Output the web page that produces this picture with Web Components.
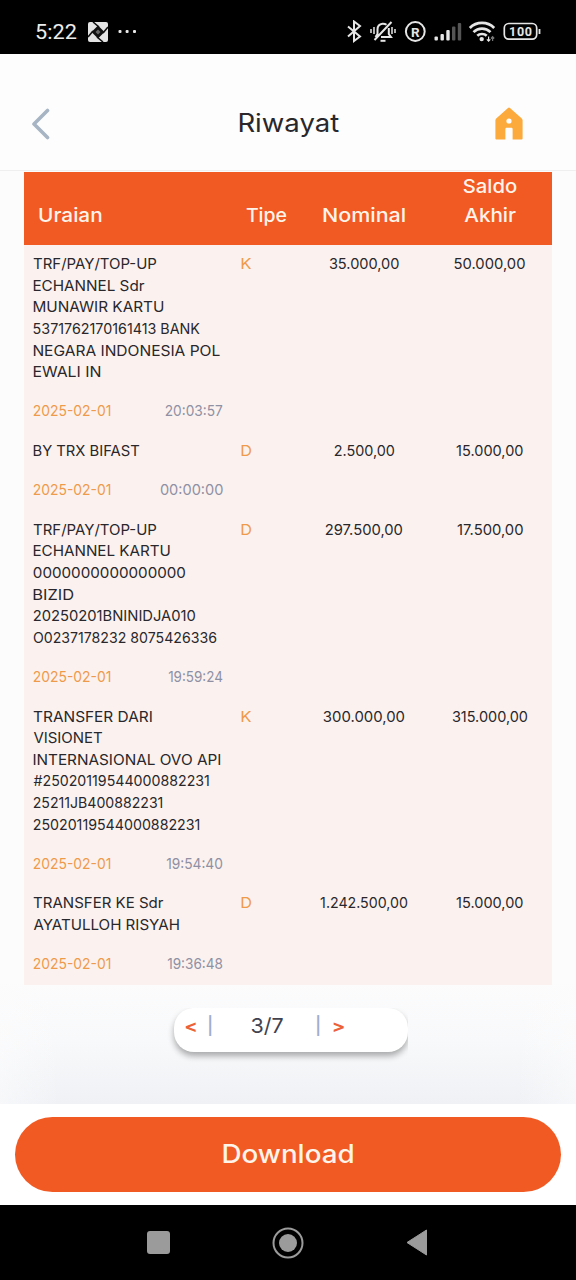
<!DOCTYPE html>
<html lang="id">
<head>
<meta charset="utf-8">
<meta name="viewport" content="width=device-width, initial-scale=1">
<title>Riwayat</title>
<style>
  body {
    margin: 0;
    background: #fcfcfd;
    color: #29272b;
    font-family: Inter, "Liberation Sans", sans-serif;
  }
</style>
</head>
<body>
<history-app></history-app>

<script>
/**
 * Single line of text stretched to a fixed ink width
 * <fit-text w="62">Uraian</fit-text>
 */
class FitText extends HTMLElement {
  constructor() {
    super();
    this.attachShadow({ mode: 'open' });
    this.shadowRoot.innerHTML = `
      <style>
        :host { display: inline-block; white-space: nowrap; text-align: left; }
        span { display: inline-block; vertical-align: top; transform-origin: 0 50%; }
      </style>
      <span><slot></slot></span>
    `;
  }

  connectedCallback() {
    const width = Number(this.getAttribute('w'));
    const style = getComputedStyle(this);
    const ctx = FitText.canvas.getContext('2d');
    // Measured at 10x, the small sizes are rounded to whole pixels
    ctx.font = `${style.fontWeight} ${parseFloat(style.fontSize) * 10}px ${style.fontFamily}`;
    const m = ctx.measureText(this.textContent);
    const left = m.actualBoundingBoxLeft / 10;
    const ink = left + m.actualBoundingBoxRight / 10;
    // Leave room for the soft edge of the outer glyphs
    const edge = width > 5 ? 0.5 : 0;
    const scale = (width - edge * 2) / ink;

    this.style.width = `${width}px`;
    this.shadowRoot.querySelector('span').style.transform =
      `translateX(${edge + 0.2}px) scaleX(${scale}) translateX(${left}px)`;
  }
}
FitText.canvas = document.createElement('canvas');

// Android status bar
class StatusBar extends HTMLElement {
  constructor() {
    super();
    this.attachShadow({ mode: 'open' });
    this.shadowRoot.innerHTML = `
      <style>
        :host {
          display: flex;
          justify-content: space-between;
          align-items: center;
          box-sizing: border-box;
          height: 54px;
          padding: 9px 35px 0 36px;
          background: #000;
          color: #ececec;
          font-family: Roboto, sans-serif;
          font-size: 20.5px;
        }
        .side { display: flex; align-items: center; }
        svg { display: block; }
        .app { margin: 0 10px 0 11px; }
      </style>
      <div class="side">
        <fit-text w="40.5">5:22</fit-text>
        <svg class="app" width="20" height="20" viewBox="0 0 20 20">
          <rect width="20" height="20" rx="2" fill="#e4e4e4"/>
          <path d="M10 3.5L16.5 10L10 16.5L3.5 10Z" fill="#111"/>
          <path d="M5 0L11 5M20 5L15 11M15 20L9 15M0 15L5 9" stroke="#111" stroke-width="1.6"/>
          <path d="M10 7.5L12.5 10L10 12.5L7.5 10Z" fill="#666"/>
        </svg>
        <svg width="20" height="4" viewBox="0 0 20 4" fill="#e8e8e8">
          <rect x=".5" y="0" width="3" height="3" rx="1"/>
          <rect x="7.6" y="0" width="3" height="3" rx="1"/>
          <rect x="15" y="0" width="3" height="3" rx="1"/>
        </svg>
      </div>
      <div class="side">
        <svg width="194" height="24" viewBox="347 19.5 194 24" fill="none" stroke="#e6e6e6" stroke-width="2">
          <!-- bluetooth -->
          <path d="M348 26L360 36L354 40.5V21L360 25.5L348 36"/>
          <!-- muted bell -->
          <path d="M375.5 36.5L377.5 33.5V29C377.5 25.5 379.5 23.5 382.5 23.2C384 23.1 385.5 23.5 386.5 24.3M388.8 27.5V33.5L391 36.6H381M374.5 39.5L391.5 21.5" stroke-width="2"/>
          <path d="M380.5 40.3H385.5" stroke-width="2"/>
          <path d="M371 28.5V32.5M374 26.5V33.5M392 26.5V33.5M395 28.5V32.5" stroke-width="1.5"/>
          <!-- registered -->
          <circle cx="415.3" cy="31" r="9.4"/>
          <text x="415.3" y="36" text-anchor="middle" fill="#e6e6e6" stroke="none" font-size="13.5" font-weight="700">R</text>
          <!-- signal -->
          <g stroke="none" fill="#e6e6e6">
            <rect x="434.5" y="36" width="3.4" height="4" rx="1"/>
            <rect x="440.5" y="33.5" width="3.4" height="6.5" rx="1"/>
            <rect x="446.3" y="29.5" width="3.4" height="10.5" rx="1"/>
            <g fill="#555">
              <rect x="452" y="26" width="3.4" height="14" rx="1"/>
              <rect x="457.8" y="22.5" width="3.4" height="17.5" rx="1"/>
            </g>
          </g>
          <!-- wifi -->
          <path d="M469.8 27.5C476.5 20.8 487.5 20.8 494.2 27.5M473.5 31.6C478.2 27 485.8 27 490.5 31.6M477.3 35.3C479.8 32.9 484.2 32.9 486.7 35.3" stroke-width="2.7"/>
          <circle cx="481.7" cy="38.6" r="2.2" fill="#e6e6e6" stroke="none"/>
          <path d="M488.6 36V40.5M486.9 38.8L488.6 40.6L490.3 38.8" stroke-width="1.2"/>
          <path d="M492.6 40.5V36.2M491 38L492.6 36.2L494.2 38" stroke="#777" stroke-width="1.2"/>
          <!-- battery -->
          <rect x="504.3" y="23" width="32.4" height="15.6" rx="4.5" stroke-width="1.7"/>
          <path d="M539.5 28.5V33.5" stroke-width="1.8"/>
          <text x="520.5" y="35.4" text-anchor="middle" textLength="23" fill="#e6e6e6" stroke="none" font-size="12.5" font-weight="700">100</text>
        </svg>
      </div>
    `;
  }
}

// Title bar with back and home buttons
class TitleBar extends HTMLElement {
  constructor() {
    super();
    this.attachShadow({ mode: 'open' });
    this.shadowRoot.innerHTML = `
      <style>
        :host {
          display: grid;
          grid-template-columns: 1fr auto 1fr;
          align-items: center;
          box-sizing: border-box;
          height: 117px;
          padding: 23px 53px 0 31px;
          border-bottom: 1px solid #efefef;
          background: #fdfdfd;
          font-size: 25px;
          line-height: 36px;
        }
        .title { padding: 0 0 1px 23px; }
        .home { justify-self: end; }
        svg { display: block; }
      </style>
      <svg width="20" height="32" viewBox="0 0 20 32">
        <path d="M16.5 2.5L3 16L16.5 29.5" fill="none" stroke="#a6b4c3" stroke-width="3.6" stroke-linecap="round" stroke-linejoin="round"/>
      </svg>
      <div class="title"><slot></slot></div>
      <svg class="home" width="28" height="33" viewBox="0 0 28 33">
        <path d="M13 .9Q14 0 15 .9L26.8 11.5Q27.6 12.3 27.6 13.5V31.5Q27.6 32.5 26.6 32.5H17.6V22Q17.6 20.8 16.6 20.8H11.4Q10.4 20.8 10.4 22V32.5H1.4Q.4 32.5 .4 31.5V13.5Q.4 12.3 1.2 11.5Z" fill="#fdaa3c"/>
        <circle cx="14" cy="14" r="2.6" fill="#fdfdfd"/>
      </svg>
    `;
  }
}

/**
 * One row of the history table
 * Values are [text, width] pairs
 */
class HistoryRow extends HTMLElement {
  constructor() {
    super();
    this.attachShadow({ mode: 'open' });
  }

  set data(row) {
    const fit = ([text, w]) => `<fit-text w="${w}">${text}</fit-text>`;
    this.shadowRoot.innerHTML = `
      <style>
        :host {
          display: grid;
          grid-template-columns: 208px 60px 126px 125px;
          padding: 8.3px 0 9.7px 9px;
          font-size: 14.4px;
          line-height: 21.6px;
        }
        fit-text { display: block; height: 21.6px; }
        .meta {
          display: flex;
          justify-content: space-between;
          width: 189.5px;
          margin-top: 17.6px;
        }
        .date, .type { color: #ef9a4b; }
        .time { color: #8f90a4; }
        .amount { display: flex; justify-content: center; }
      </style>
      <div>
        ${row.lines.map(fit).join('')}
        <div class="meta">
          <span class="date">${fit(['2025-02-01', 77.5])}</span>
          <span class="time">${fit(row.time)}</span>
        </div>
      </div>
      <div class="type">${fit([row.type, 10.5])}</div>
      <div class="amount">${fit(row.nominal)}</div>
      <div class="amount">${fit(row.saldo)}</div>
    `;
  }
}

class HistoryTable extends HTMLElement {
  constructor() {
    super();
    this.attachShadow({ mode: 'open' });
    this.shadowRoot.innerHTML = `
      <style>
        :host { display: block; background: #fbf2ef; }
        .head {
          display: grid;
          grid-template-columns: 217px 60px 126px 125px;
          align-items: end;
          box-sizing: border-box;
          height: 73px;
          padding-bottom: 15px;
          background: #f15a23;
          color: #fff4ea;
          font-size: 19.2px;
          font-weight: 500;
          line-height: 28.8px;
        }
        .head div { text-align: center; }
        .head .left { text-align: left; padding-left: 14.5px; }
        .head .type { text-align: left; padding-left: 4.5px; }
        fit-text { vertical-align: top; }
      </style>
      <div class="head">
        <div class="left"><fit-text w="62.5">Uraian</fit-text></div>
        <div class="type"><fit-text w="40.5">Tipe</fit-text></div>
        <div><fit-text w="82">Nominal</fit-text></div>
        <div><fit-text w="53.5">Saldo</fit-text><br><fit-text w="52">Akhir</fit-text></div>
      </div>
    `;
  }

  set rows(rows) {
    rows.forEach((data) => {
      const row = document.createElement('history-row');
      row.data = data;
      this.shadowRoot.appendChild(row);
    });
  }
}

class PageSwitch extends HTMLElement {
  constructor() {
    super();
    this.attachShadow({ mode: 'open' });
    this.shadowRoot.innerHTML = `
      <style>
        :host {
          display: flex;
          align-items: center;
          box-sizing: border-box;
          width: 234px;
          height: 44px;
          padding: 0 64px 9px 11px;
          border-radius: 20px;
          background: #fff;
          box-shadow: 0 4px 6px rgba(0, 0, 0, 0.32);
          clip-path: inset(0 0 -20px -20px);
          color: #42424f;
          font-size: 20.5px;
          line-height: 24px;
        }
        .arrow { color: #ec6238; font-size: 17px; font-weight: 700; }
        .bar { color: #9fafcd; font-size: 17.5px; }
        .prev { margin-left: 13px; }
        .next { margin-right: 14px; }
        .page { flex: 1; text-align: center; padding-left: 6px; }
      </style>
      <fit-text class="arrow" w="11">&lt;</fit-text>
      <fit-text class="bar prev" w="2">|</fit-text>
      <div class="page"><fit-text w="32">3/7</fit-text></div>
      <fit-text class="bar next" w="2">|</fit-text>
      <fit-text class="arrow" w="11">&gt;</fit-text>
    `;
  }
}

class DownloadBar extends HTMLElement {
  constructor() {
    super();
    this.attachShadow({ mode: 'open' });
    this.shadowRoot.innerHTML = `
      <style>
        :host { display: block; padding: 13px 15px; background: #fff; font-size: 25px; font-weight: 500; }
        button {
          display: block;
          width: 100%;
          height: 75px;
          padding: 0 0 2px;
          border: 0;
          border-radius: 37.5px;
          background: #f15a23;
          color: #fff4ea;
          font: inherit;
          line-height: 36px;
        }
      </style>
      <button><slot></slot></button>
    `;
  }
}

// Android navigation buttons
class SystemNav extends HTMLElement {
  constructor() {
    super();
    this.attachShadow({ mode: 'open' });
    this.shadowRoot.innerHTML = `
      <style>
        :host {
          display: flex;
          justify-content: space-between;
          align-items: center;
          box-sizing: border-box;
          height: 75px;
          padding: 0 148px 0 147px;
          background: #000;
        }
      </style>
      <svg width="23" height="23"><rect width="23" height="23" rx="3" fill="#9b9b9b"/></svg>
      <svg width="32" height="32" viewBox="0 0 32 32">
        <circle cx="16" cy="16" r="14.5" fill="none" stroke="#9b9b9b" stroke-width="2"/>
        <circle cx="16" cy="16" r="9" fill="#9b9b9b"/>
      </svg>
      <svg width="22" height="27" viewBox="0 0 22 27">
        <path d="M1 13.5L20.5 1V26Z" fill="#9b9b9b" stroke="#9b9b9b" stroke-linejoin="round"/>
      </svg>
    `;
  }
}

class HistoryApp extends HTMLElement {
  constructor() {
    super();
    this.attachShadow({ mode: 'open' });
    this.shadowRoot.innerHTML = `
      <style>
        :host { display: flex; flex-direction: column; height: 1280px; overflow: hidden; }
        main {
          flex: 1;
          display: flex;
          flex-direction: column;
          box-sizing: border-box;
          padding: 1px 24px 0;
          background:
            linear-gradient(90deg, rgba(252, 252, 253, 0.6), rgba(252, 252, 253, 0) 60px, rgba(252, 252, 253, 0) 516px, rgba(252, 252, 253, 0.6)),
            linear-gradient(#fcfcfd 810px, #f8f9fa 870px, #eff1f5 933px);
        }
        history-table { height: 813px; }
        page-switch { margin: 23px 0 0 150px; }
      </style>
      <status-bar></status-bar>
      <title-bar><fit-text w="100">Riwayat</fit-text></title-bar>
      <main>
        <history-table></history-table>
        <page-switch></page-switch>
      </main>
      <download-bar><fit-text w="130">Download</fit-text></download-bar>
      <system-nav></system-nav>
    `;
    this.shadowRoot.querySelector('history-table').rows = TRANSACTIONS;
  }
}

const TRANSACTIONS = [
  {
    lines: [
      ['TRF/PAY/TOP-UP', 123.5],
      ['ECHANNEL Sdr', 111.5],
      ['MUNAWIR KARTU', 130.5],
      ['5371762170161413 BANK', 167],
      ['NEGARA INDONESIA POL', 187],
      ['EWALI IN', 67.5]
    ],
    time: ['20:03:57', 57.5],
    type: 'K',
    nominal: ['35.000,00', 70],
    saldo: ['50.000,00', 71]
  },
  {
    lines: [['BY TRX BIFAST', 106.5]],
    time: ['00:00:00', 63],
    type: 'D',
    nominal: ['2.500,00', 60.5],
    saldo: ['15.000,00', 67]
  },
  {
    lines: [
      ['TRF/PAY/TOP-UP', 123.5],
      ['ECHANNEL KARTU', 137],
      ['0000000000000000', 152.5],
      ['BIZID', 40.5],
      ['20250201BNINIDJA010', 162.5],
      ['O0237178232 8075426336', 183.5]
    ],
    time: ['19:59:24', 54.5],
    type: 'D',
    nominal: ['297.500,00', 77.5],
    saldo: ['17.500,00', 66]
  },
  {
    lines: [
      ['TRANSFER DARI', 119],
      ['VISIONET', 69.5],
      ['INTERNASIONAL OVO API', 187.5],
      ['#25020119544000882231', 176],
      ['25211JB400882231', 129.5],
      ['25020119544000882231', 166.5]
    ],
    time: ['19:54:40', 56.5],
    type: 'K',
    nominal: ['300.000,00', 81.5],
    saldo: ['315.000,00', 75.5]
  },
  {
    lines: [
      ['TRANSFER KE Sdr', 130.5],
      ['AYATULLOH RISYAH', 146]
    ],
    time: ['19:36:48', 55.5],
    type: 'D',
    nominal: ['1.242.500,00', 87.5],
    saldo: ['15.000,00', 67]
  }
];

customElements.define('fit-text', FitText);
customElements.define('status-bar', StatusBar);
customElements.define('title-bar', TitleBar);
customElements.define('history-row', HistoryRow);
customElements.define('history-table', HistoryTable);
customElements.define('page-switch', PageSwitch);
customElements.define('download-bar', DownloadBar);
customElements.define('system-nav', SystemNav);
customElements.define('history-app', HistoryApp);
</script>
</body>
</html>
